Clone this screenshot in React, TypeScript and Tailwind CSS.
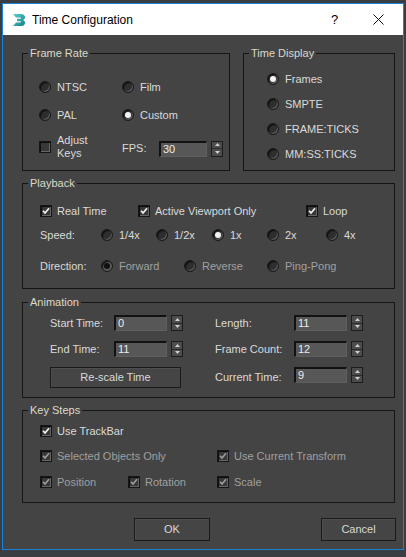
import React from "react";

const TXT = "text-[#dadada]";
const DIM = "text-[#a0a0a0]";

function Radio({ on, dim }: { on?: boolean; dim?: boolean }) {
  return (
    <span
      className={
        "flex h-[12px] w-[12px] shrink-0 items-center justify-center rounded-full border border-[#1a1a1a] shadow-[inset_1px_1px_1px_#0c0c0c,inset_-1px_-1px_0_#5e5e5e] " +
        (on && dim ? "bg-[#5a5a5a]" : on ? "bg-[#3a3a3a]" : "bg-[#2e2e2e]")
      }
    >
      {on && (
        <span
          className={
            "h-[6px] w-[6px] rounded-full " + (dim ? "bg-[#101010]" : "bg-[#f4f4f4]")
          }
        />
      )}
    </span>
  );
}

function Check({ on, dim }: { on?: boolean; dim?: boolean }) {
  return (
    <span className="flex h-[12px] w-[12px] shrink-0 items-center justify-center border border-[#161616] bg-[#383838] shadow-[inset_1px_1px_0_#0e0e0e,inset_-1px_-1px_0_#666666]">
      {on && (
        <svg width="8" height="8" viewBox="0 0 8 8">
          <path
            d="M1 3.8 L3 6 L7 1.2"
            stroke={dim ? "#9a9a9a" : "#f2f2f2"}
            strokeWidth="1.7"
            fill="none"
          />
        </svg>
      )}
    </span>
  );
}

function Spinner() {
  return (
    <div className="flex h-[16px] w-[12px] shrink-0 flex-col border border-[#1c1c1c] bg-[#4c4c4c]">
      <div className="flex flex-1 items-center justify-center border-b border-[#2a2a2a]">
        <svg width="5" height="3" viewBox="0 0 5 3">
          <path d="M0 3 L2.5 0 L5 3 Z" fill="#cfcfcf" />
        </svg>
      </div>
      <div className="flex flex-1 items-center justify-center">
        <svg width="5" height="3" viewBox="0 0 5 3">
          <path d="M0 0 L2.5 3 L5 0 Z" fill="#cfcfcf" />
        </svg>
      </div>
    </div>
  );
}

function Field({ v, w = 53 }: { v: string; w?: number }) {
  return (
    <div className="flex items-center gap-[4px]">
      <div
        className={
          "flex h-[16px] items-center border-t-2 border-l-2 border-r border-b border-t-[#121212] border-l-[#121212] border-r-[#5f5f5f] border-b-[#5f5f5f] bg-[#575757] pl-[2px] text-[#ececec] " +
          (w === 48 ? "w-[48px]" : "w-[53px]")
        }
      >
        {v}
      </div>
      <Spinner />
    </div>
  );
}

function Group({
  title,
  className,
  children,
}: {
  title: string;
  className: string;
  children: React.ReactNode;
}) {
  return (
    <div className={"relative border border-[#151515] " + className}>
      <span className="absolute -top-[7px] left-[5px] bg-[#444444] px-[2px] leading-[13px] text-[#ddd9c9]">
        {title}
      </span>
      {children}
    </div>
  );
}

function RL({ on, dim, label, tc }: { on?: boolean; dim?: boolean; label: string; tc?: string }) {
  return (
    <div className="flex h-[14px] items-center gap-[6px]">
      <Radio on={on} dim={dim} />
      <span className={tc ?? TXT}>{label}</span>
    </div>
  );
}

function CL({ on, dim, label }: { on?: boolean; dim?: boolean; label: string }) {
  return (
    <div className="flex h-[14px] items-center gap-[5px]">
      <Check on={on} dim={dim} />
      <span className={dim ? DIM : TXT}>{label}</span>
    </div>
  );
}

function Btn({ label, className }: { label: string; className: string }) {
  return (
    <div
      className={
        "flex items-center justify-center border border-[#1a1a1a] bg-[#454545] text-[#d9d9d9] shadow-[inset_1px_1px_0_#4e4e4e] " +
        className
      }
    >
      {label}
    </div>
  );
}

export default function App() {
  return (
    <div className="h-[557px] w-[406px] overflow-hidden bg-[#3a3d42] pt-[3px] pl-[2px] font-['Liberation_Sans',Arial,sans-serif] text-[11px]">
      <div className="w-[402px] border border-[#1a83d8]">
        {/* Title bar */}
        <div className="flex h-[31px] items-center bg-white pl-[8px] text-[12px] text-black">
          <svg width="16" height="16" viewBox="0 0 16 16" className="shrink-0">
            <defs>
              <linearGradient id="tl" x1="0" y1="0" x2="1" y2="1">
                <stop offset="0" stopColor="#5fd0cc" />
                <stop offset="1" stopColor="#137f86" />
              </linearGradient>
            </defs>
            <path
              d="M2 2 H10 Q14 2 14 5.5 Q14 7.5 12 8 Q14 8.6 14 10.5 Q14 14 10 14 H2 L5 10.5 H9 Q10 10.5 10 9.8 Q10 9.2 9 9.2 H6 V6.8 H9 Q10 6.8 10 6.2 Q10 5.5 9 5.5 H5 Z"
              fill="url(#tl)"
            />
          </svg>
          <span className="ml-[5px]">Time Configuration</span>
          <span className="ml-[198px] text-[13px] font-light">?</span>
          <svg width="11" height="11" viewBox="0 0 11 11" className="ml-[35px]">
            <path d="M0.5 0.5 L10.5 10.5 M10.5 0.5 L0.5 10.5" stroke="#111" strokeWidth="1" />
          </svg>
        </div>

        {/* Content */}
        <div className="flex h-[514px] flex-col bg-[#444444] pl-[19px] pt-[18px] leading-[13px]">
          <div className="flex gap-[13px]">
            <Group title="Frame Rate" className="h-[118px] w-[208px] pl-[16px] pt-[26px]">
              <div className="flex flex-col gap-[14px]">
                <div className="flex">
                  <div className="w-[83px]">
                    <RL label="NTSC" />
                  </div>
                  <RL label="Film" />
                </div>
                <div className="flex">
                  <div className="w-[83px]">
                    <RL label="PAL" />
                  </div>
                  <RL label="Custom" on />
                </div>
              </div>
              <div className="mt-[12px] flex">
                <div className="flex w-[83px] items-center gap-[6px]">
                  <Check />
                  <div className={"flex flex-col " + TXT}>
                    <span>Adjust</span>
                    <span>Keys</span>
                  </div>
                </div>
                <div className="mt-[3px] flex items-center">
                  <span className={"w-[37px] " + TXT}>FPS:</span>
                  <Field v="30" w={48} />
                </div>
              </div>
            </Group>
            <Group title="Time Display" className="h-[118px] w-[152px] pl-[23px] pt-[18px]">
              <div className="flex flex-col gap-[11px]">
                <RL label="Frames" on />
                <RL label="SMPTE" />
                <RL label="FRAME:TICKS" />
                <RL label="MM:SS:TICKS" />
              </div>
            </Group>
          </div>

          <Group title="Playback" className="mt-[12px] h-[106px] w-[373px] pl-[17px] pt-[20px]">
            <div className="flex">
              <div className="w-[98px]">
                <CL label="Real Time" on />
              </div>
              <div className="w-[168px]">
                <CL label="Active Viewport Only" on />
              </div>
              <CL label="Loop" on />
            </div>
            <div className="mt-[10px] flex">
              <span className={"flex h-[14px] w-[61px] items-center " + TXT}>Speed:</span>
              <div className="w-[55px]">
                <RL label="1/4x" />
              </div>
              <div className="w-[56px]">
                <RL label="1/2x" />
              </div>
              <div className="w-[55px]">
                <RL label="1x" on />
              </div>
              <div className="w-[59px]">
                <RL label="2x" />
              </div>
              <RL label="4x" />
            </div>
            <div className="mt-[17px] flex">
              <span className={"flex h-[14px] w-[61px] items-center " + TXT}>Direction:</span>
              <div className="w-[83px]">
                <RL label="Forward" on dim tc={DIM} />
              </div>
              <div className="w-[83px]">
                <RL label="Reverse" tc={DIM} />
              </div>
              <RL label="Ping-Pong" tc={DIM} />
            </div>
          </Group>

          <Group title="Animation" className="mt-[13px] h-[96px] w-[373px] pl-[27px] pt-[12px]">
            <div className="flex flex-col gap-[10px]">
              <div className="flex items-center">
                <span className={"w-[64px] " + TXT}>Start Time:</span>
                <Field v="0" />
                <span className={"ml-[32px] w-[79px] " + TXT}>Length:</span>
                <Field v="11" />
              </div>
              <div className="flex items-center">
                <span className={"w-[64px] " + TXT}>End Time:</span>
                <Field v="11" />
                <span className={"ml-[32px] w-[79px] " + TXT}>Frame Count:</span>
                <Field v="12" />
              </div>
              <div className="flex items-start">
                <Btn label="Re-scale Time" className="h-[21px] w-[131px]" />
                <span className={"ml-[34px] flex h-[21px] w-[79px] items-center " + TXT}>
                  Current Time:
                </span>
                <Field v="9" />
              </div>
            </div>
          </Group>

          <Group title="Key Steps" className="mt-[12px] h-[93px] w-[373px] pl-[17px] pt-[13px]">
            <CL label="Use TrackBar" on />
            <div className="mt-[11px] flex">
              <div className="w-[177px]">
                <CL label="Selected Objects Only" on dim />
              </div>
              <CL label="Use Current Transform" on dim />
            </div>
            <div className="mt-[12px] flex">
              <div className="w-[88px]">
                <CL label="Position" on dim />
              </div>
              <div className="w-[89px]">
                <CL label="Rotation" on dim />
              </div>
              <CL label="Scale" on dim />
            </div>
          </Group>

          <div className="mt-[15px] flex">
            <Btn label="OK" className="ml-[112px] h-[23px] w-[76px]" />
            <Btn label="Cancel" className="ml-[111px] h-[23px] w-[75px]" />
          </div>
        </div>
      </div>
    </div>
  );
}
